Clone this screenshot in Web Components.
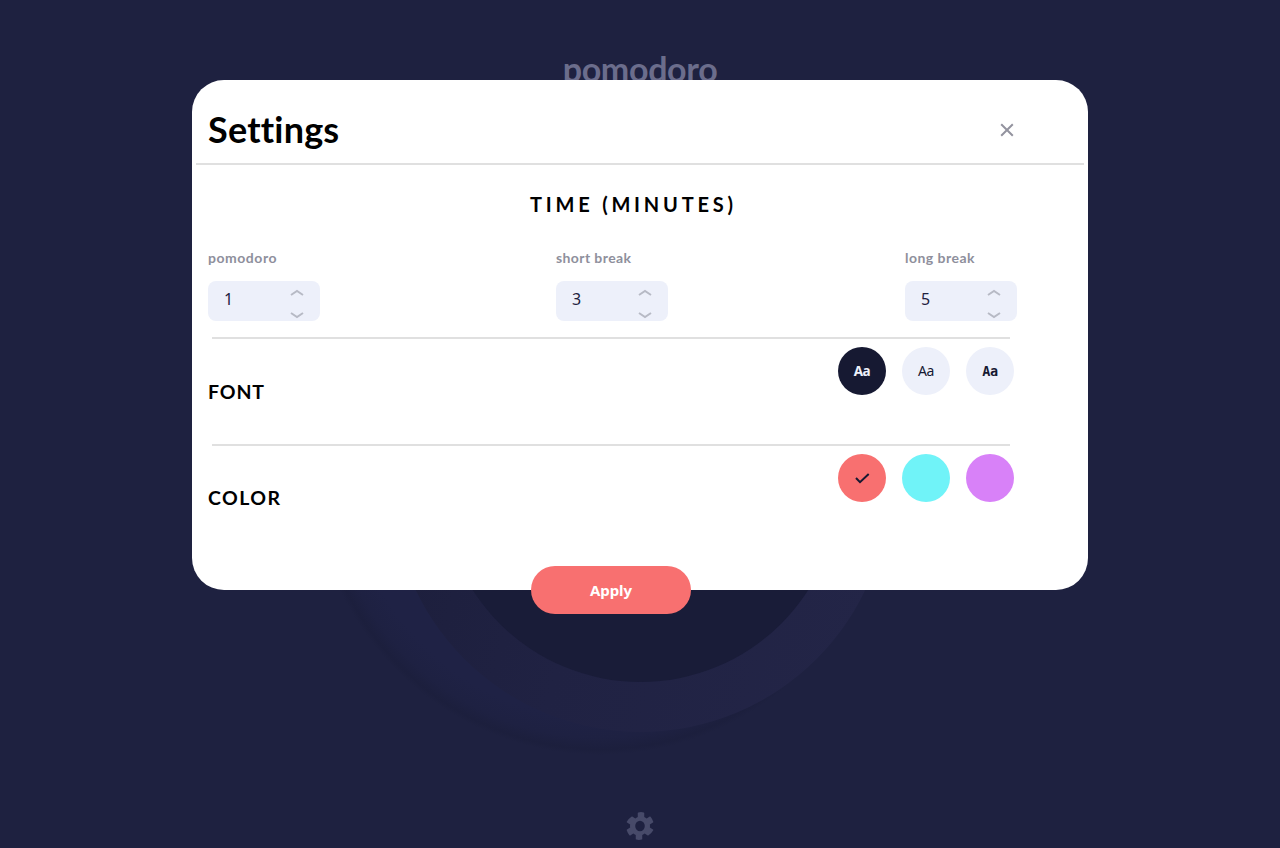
<!DOCTYPE html>
<html lang="en">
<head>
<meta charset="utf-8">
<title>Pomodoro</title>
<style>
html,body{margin:0;height:100%;overflow:hidden;background:#1e2140}
body{font-family:Lato,"Open Sans",sans-serif}
</style>
</head>
<body>
<pomodoro-app></pomodoro-app>
<script>
function define(name, html, setup) {
  const t = document.createElement('template');
  t.innerHTML = html;
  customElements.define(name, class extends HTMLElement {
    constructor() {
      super();
      this.attachShadow({mode: 'open'}).append(t.content.cloneNode(true));
    }
    connectedCallback() { if (setup) setup(this, this.shadowRoot); }
  });
}

// Tracks a label out (or in) so that its ink spans a given width.
define('tracked-text', `<style>
:host{display:inline-block;white-space:pre}
span{display:inline-block;white-space:pre}
</style><span><slot></slot></span>`, (el, root) => {
  const s = root.querySelector('span');
  const n = el.textContent.length;
  const w = +el.getAttribute('width');
  s.style.letterSpacing = '0px';
  const natural = s.getBoundingClientRect().width;
  s.style.letterSpacing = ((w - natural) / (n - 1)) + 'px';
});

define('timer-dial', `<style>:host,svg{display:block}</style>
<svg width="760" height="600" viewBox="260 190 760 600">
<defs>
<linearGradient id="ring" x1="0" y1=".35" x2="1" y2=".65"><stop offset="0" stop-color="#1c1e3a"/><stop offset=".22" stop-color="#1e203f"/><stop offset=".45" stop-color="#202243"/><stop offset="1" stop-color="#232547"/></linearGradient>
<radialGradient id="glow"><stop offset="0" stop-color="#1f2246"/><stop offset=".87" stop-color="#1f2245"/><stop offset=".94" stop-color="#1e2142"/><stop offset=".98" stop-color="#1c1f3d"/><stop offset="1" stop-color="#1e2140"/></radialGradient>
</defs>
<circle cx="600" cy="467" r="288" fill="url(#glow)"/>
<circle cx="640.5" cy="483" r="249" fill="url(#ring)"/>
<circle cx="640.5" cy="483" r="199" fill="#191c38"/>
</svg>`);

define('section-rule', `<style>:host{display:block;height:2px;background:#e0e0e0;margin:0 4px}</style>`);

define('number-field', `<style>
:host{display:block;width:112px}
label{display:block;height:16px;line-height:16px;font-size:14px;font-weight:700;color:#8e8f9c;margin-bottom:15px}
.box{box-sizing:border-box;height:40px;border-radius:8px;background:#edf0fa;padding:0 16px;display:flex;justify-content:space-between}
.value{font-family:"Noto Sans",sans-serif;font-size:16px;line-height:37px;color:#1e213f}
.steps{display:flex;flex-direction:column;justify-content:space-between;padding:8px 0 2px}
svg{display:block}
</style>
<label><slot></slot></label>
<div class="box"><span class="value"></span><div class="steps">
<svg width="14" height="7" viewBox="0 0 14 7"><path d="M1 6l6-4 6 4" fill="none" stroke="#b7bac5" stroke-width="2"/></svg>
<svg width="14" height="7" viewBox="0 0 14 7"><path d="M1 1l6 4 6-4" fill="none" stroke="#b7bac5" stroke-width="2"/></svg>
</div></div>`, (el, r) => { r.querySelector('.value').textContent = el.getAttribute('value'); });

define('round-option', `<style>
:host{display:flex;align-items:center;justify-content:center;width:48px;height:48px;border-radius:50%;background:var(--fill,#edf0fa);color:var(--ink,#161932);font-size:14px;line-height:48px}
</style><slot></slot>`);

define('option-row', `<style>
:host{display:flex;justify-content:space-between;padding:8px 10px 0 0;height:97px}
h3{margin:0;font-size:19.5px;line-height:24px;font-weight:700;color:#000;padding-top:var(--drop,33px)}
.choices{display:flex;gap:16px}
</style><h3><slot name="title"></slot></h3><div class="choices"><slot></slot></div>`);

define('apply-button', `<style>
:host{display:block;width:160px;height:48px;border-radius:24px;background:#f87070;color:#fff;font:700 15px/48px "Noto Sans","Open Sans",sans-serif;text-align:center}
</style><slot></slot>`);

define('settings-dialog', `<style>
:host{display:block;box-sizing:border-box;width:896px;height:510px;border-radius:32px;background:#fff}
header{height:83px;display:flex;justify-content:space-between;box-sizing:border-box;padding:0 74px 0 16px}
h1{margin:0;padding-top:27px;font-size:36px;line-height:44px;font-weight:700;color:#000}
header svg{display:block;margin-top:43px}
.body{padding:0 74px 0 16px}
.body section-rule{margin-right:4px}
h2{margin:0;padding:27px 0 0 322px;font-size:20px;line-height:24px;font-weight:700;color:#000;white-space:nowrap}
.times{display:grid;grid-template-columns:348px 349px 112px;margin:34px -3px 16px 0}
option-row{padding-right:0}
.apply{display:flex;padding-left:323px;margin-top:15px}
</style>
<header><h1><tracked-text width="130">Settings</tracked-text></h1>
<svg width="14" height="14" viewBox="0 0 14 14"><path d="M1.2 1.2l11.6 11.6M12.8 1.2L1.2 12.8" stroke="#93939f" stroke-width="2"/></svg></header>
<section-rule></section-rule>
<div class="body">
<h2><tracked-text width="203">TIME (MINUTES)</tracked-text></h2>
<div class="times">
<number-field value="1"><tracked-text width="68.5">pomodoro</tracked-text></number-field>
<number-field value="3"><tracked-text width="75">short break</tracked-text></number-field>
<number-field value="5"><tracked-text width="69.5">long break</tracked-text></number-field>
</div>
<section-rule></section-rule>
<option-row><tracked-text slot="title" width="56">FONT</tracked-text>
<round-option style="--fill:#161932;--ink:#edf0fa;font:700 13.5px 'Noto Sans'"><tracked-text width="17">Aa</tracked-text></round-option>
<round-option style="font-family:'Noto Sans'"><tracked-text width="16.5">Aa</tracked-text></round-option>
<round-option style="font:700 13.5px 'DejaVu Sans Mono'"><tracked-text width="16">Aa</tracked-text></round-option>
</option-row>
<section-rule></section-rule>
<option-row style="--drop:32px"><tracked-text slot="title" width="72">COLOR</tracked-text>
<round-option style="--fill:#f87070"><svg width="15" height="11" viewBox="0 0 15 11"><path d="M1 5l4 4.2L13.7 1" fill="none" stroke="#161932" stroke-width="2"/></svg></round-option>
<round-option style="--fill:#70f3f8"></round-option>
<round-option style="--fill:#d881f8"></round-option>
</option-row>
<div class="apply"><apply-button><tracked-text width="42">Apply</tracked-text></apply-button></div>
</div>`);

define('settings-gear', `<style>:host,svg{display:block}</style>
<svg width="28" height="30" viewBox="0 0 28 28" preserveAspectRatio="none"><path fill="#474a69" fill-rule="evenodd" d="M26.97 17.2l-3.1-1.8a9 9 0 0 0 0-2.8l3.1-1.8a.7.7 0 0 0 .3-.8 14 14 0 0 0-2.7-4.7.7.7 0 0 0-.85-.13l-3 1.75a10 10 0 0 0-2.47-1.43V1.98a.7.7 0 0 0-.54-.67 14 14 0 0 0-5.42 0 .7.7 0 0 0-.54.67v3.51a10 10 0 0 0-2.47 1.43l-3-1.75a.7.7 0 0 0-.85.13A14 14 0 0 0 .73 10a.7.7 0 0 0 .3.8l3.1 1.8a9 9 0 0 0 0 2.8l-3.1 1.8a.7.7 0 0 0-.3.8 14 14 0 0 0 2.7 4.7.7.7 0 0 0 .85.13l3-1.75a10 10 0 0 0 2.47 1.43v3.51c0 .3.2.6.54.67a14 14 0 0 0 5.42 0 .7.7 0 0 0 .54-.67v-3.51a10 10 0 0 0 2.47-1.43l3 1.75c.3.17.63.12.85-.13A14 14 0 0 0 27.27 18a.7.7 0 0 0-.3-.8zM14 18.8a4.8 4.8 0 1 1 0-9.6 4.8 4.8 0 0 1 0 9.6z"/></svg>`);

define('pomodoro-app', `<style>
:host{display:grid;grid-template:848px/1280px;overflow:hidden}
:host>*{grid-area:1/1}
.page{display:flex;flex-direction:column;align-items:center;justify-content:space-between;padding:49px 0 7px}
.logo{font-size:34px;line-height:40px;font-weight:700;color:#6b6d8c}
timer-dial{place-self:start center;margin-top:190px}
settings-dialog{place-self:start center;margin-top:80px;z-index:1}
</style>
<timer-dial></timer-dial>
<div class="page"><div class="logo"><tracked-text width="155">pomodoro</tracked-text></div><settings-gear></settings-gear></div>
<settings-dialog></settings-dialog>`);
</script>
</body>
</html>
